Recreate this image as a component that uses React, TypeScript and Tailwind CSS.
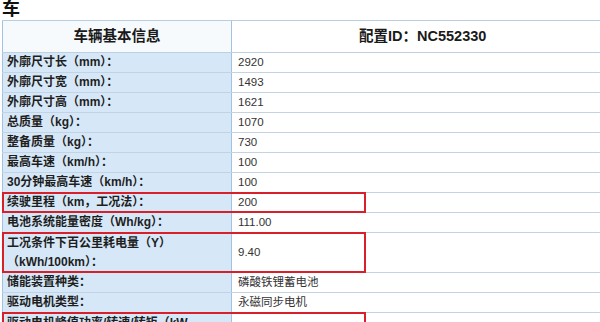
import React from "react";

type Row = { label: React.ReactNode; value: string; h: string; red?: boolean };

const rows: Row[] = [
  { label: "外廓尺寸长（mm）：", value: "2920", h: "h-[20px]" },
  { label: "外廓尺寸宽（mm）：", value: "1493", h: "h-[20px]" },
  { label: "外廓尺寸高（mm）：", value: "1621", h: "h-[20px]" },
  { label: "总质量（kg）：", value: "1070", h: "h-[20px]" },
  { label: "整备质量（kg）：", value: "730", h: "h-[20px]" },
  { label: "最高车速（km/h）：", value: "100", h: "h-[20px]" },
  { label: "30分钟最高车速（km/h）：", value: "100", h: "h-[20px]" },
  { label: "续驶里程（km，工况法）：", value: "200", h: "h-[20px]", red: true },
  { label: "电池系统能量密度（Wh/kg）：", value: "111.00", h: "h-[20px]" },
  {
    label: (
      <>
        工况条件下百公里耗电量（Y）
        <br />
        （kWh/100km）：
      </>
    ),
    value: "9.40",
    h: "h-[40px]",
    red: true,
  },
  { label: "储能装置种类：", value: "磷酸铁锂蓄电池", h: "h-[20px]" },
  { label: "驱动电机类型：", value: "永磁同步电机", h: "h-[20px]" },
  {
    label: (
      <>
        驱动电机峰值功率/转速/转矩（kW
        <br />
        /r/min/N·m）：
      </>
    ),
    value: "",
    h: "h-[40px]",
    red: true,
  },
];

export default function App() {
  return (
    <div
      className="w-[600px] h-[322px] overflow-hidden bg-white text-[#222]"
      style={{ fontFamily: '"Liberation Sans", "Noto Sans CJK SC", sans-serif' }}
    >
      <div className="h-[20px] pl-[2px] text-[18px] font-bold leading-[19px] text-[#111]">车</div>
      <div className="ml-[2px] border-t border-[#b7cde0]">
        <div className="flex h-[32px] border-b border-[#bcd0e2]">
          <div className="w-[229px] border-l border-[#a3c2de] bg-[#f6fafd] flex items-center justify-center text-[14.5px] font-bold text-[#1a1a1a]">
            车辆基本信息
          </div>
          <div className="flex-1 border-l border-[#a3c2de] flex items-center pl-[127px] text-[14.5px] font-bold text-[#1a1a1a]">
            配置ID：NC552330
          </div>
        </div>
        {rows.map((r, i) => (
          <div key={i} className={`relative flex border-b border-[#c2d4e4] ${r.h}`}>
            <div className="w-[229px] border-l border-[#a3c2de] bg-[#d6e8f8] flex items-center pl-[4px] text-[12px] font-bold leading-[19px] text-[#1e1e1e]">
              <div className="whitespace-nowrap">{r.label}</div>
            </div>
            <div className="flex-1 border-l border-[#a3c2de] flex items-center pl-[6px] text-[11.5px] text-[#333]">
              {r.value}
            </div>
            {r.red && (
              <div className="absolute left-0 top-[-1px] bottom-[-1px] w-[364px] border-2 border-[#d7202a]" />
            )}
          </div>
        ))}
      </div>
    </div>
  );
}
